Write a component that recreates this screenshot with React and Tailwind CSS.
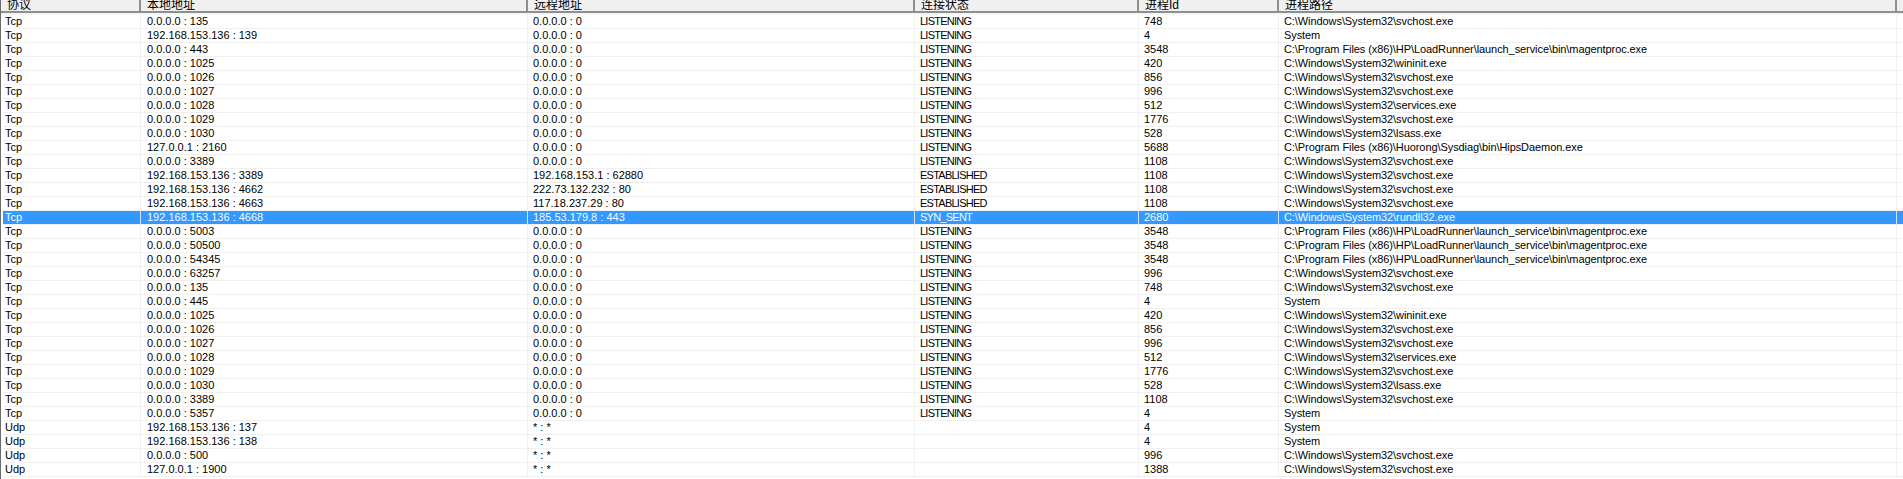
const tcp = (local, remote, state, pid, path) => ({ proto: "Tcp", local, remote, state, pid, path });
const udp = (local, pid, path) => ({ proto: "Udp", local, remote: "* : *", state: "", pid, path });

const SVCHOST = "C:\\Windows\\System32\\svchost.exe";
const WININIT = "C:\\Windows\\System32\\wininit.exe";
const SERVICES = "C:\\Windows\\System32\\services.exe";
const LSASS = "C:\\Windows\\System32\\lsass.exe";
const MAGENT = "C:\\Program Files (x86)\\HP\\LoadRunner\\launch_service\\bin\\magentproc.exe";
const ANY = "0.0.0.0 : 0";

const rows = [
  tcp("0.0.0.0 : 135", ANY, "LISTENING", "748", SVCHOST),
  tcp("192.168.153.136 : 139", ANY, "LISTENING", "4", "System"),
  tcp("0.0.0.0 : 443", ANY, "LISTENING", "3548", MAGENT),
  tcp("0.0.0.0 : 1025", ANY, "LISTENING", "420", WININIT),
  tcp("0.0.0.0 : 1026", ANY, "LISTENING", "856", SVCHOST),
  tcp("0.0.0.0 : 1027", ANY, "LISTENING", "996", SVCHOST),
  tcp("0.0.0.0 : 1028", ANY, "LISTENING", "512", SERVICES),
  tcp("0.0.0.0 : 1029", ANY, "LISTENING", "1776", SVCHOST),
  tcp("0.0.0.0 : 1030", ANY, "LISTENING", "528", LSASS),
  tcp("127.0.0.1 : 2160", ANY, "LISTENING", "5688", "C:\\Program Files (x86)\\Huorong\\Sysdiag\\bin\\HipsDaemon.exe"),
  tcp("0.0.0.0 : 3389", ANY, "LISTENING", "1108", SVCHOST),
  tcp("192.168.153.136 : 3389", "192.168.153.1 : 62880", "ESTABLISHED", "1108", SVCHOST),
  tcp("192.168.153.136 : 4662", "222.73.132.232 : 80", "ESTABLISHED", "1108", SVCHOST),
  tcp("192.168.153.136 : 4663", "117.18.237.29 : 80", "ESTABLISHED", "1108", SVCHOST),
  { ...tcp("192.168.153.136 : 4668", "185.53.179.8 : 443", "SYN_SENT", "2680", "C:\\Windows\\System32\\rundll32.exe"), selected: true },
  tcp("0.0.0.0 : 5003", ANY, "LISTENING", "3548", MAGENT),
  tcp("0.0.0.0 : 50500", ANY, "LISTENING", "3548", MAGENT),
  tcp("0.0.0.0 : 54345", ANY, "LISTENING", "3548", MAGENT),
  tcp("0.0.0.0 : 63257", ANY, "LISTENING", "996", SVCHOST),
  tcp("0.0.0.0 : 135", ANY, "LISTENING", "748", SVCHOST),
  tcp("0.0.0.0 : 445", ANY, "LISTENING", "4", "System"),
  tcp("0.0.0.0 : 1025", ANY, "LISTENING", "420", WININIT),
  tcp("0.0.0.0 : 1026", ANY, "LISTENING", "856", SVCHOST),
  tcp("0.0.0.0 : 1027", ANY, "LISTENING", "996", SVCHOST),
  tcp("0.0.0.0 : 1028", ANY, "LISTENING", "512", SERVICES),
  tcp("0.0.0.0 : 1029", ANY, "LISTENING", "1776", SVCHOST),
  tcp("0.0.0.0 : 1030", ANY, "LISTENING", "528", LSASS),
  tcp("0.0.0.0 : 3389", ANY, "LISTENING", "1108", SVCHOST),
  tcp("0.0.0.0 : 5357", ANY, "LISTENING", "4", "System"),
  udp("192.168.153.136 : 137", "4", "System"),
  udp("192.168.153.136 : 138", "4", "System"),
  udp("0.0.0.0 : 500", "996", SVCHOST),
  udp("127.0.0.1 : 1900", "1388", SVCHOST),
];

const headers = ["协议", "本地地址", "远程地址", "连接状态", "进程Id", "进程路径"];
const grid = "grid grid-cols-[138px_387px_387px_224px_140px_618px_1fr]";
const font = "font-['Liberation_Sans','Noto_Sans_CJK_SC',sans-serif] text-[11px]";

const App = () => {
  return (
    <div className={`h-[479px] w-[1903px] overflow-hidden border-l border-[#6b6b6b] bg-white text-black ${font}`}>
      <div className={`${grid} h-[13px] border-b-2 border-[#8e8f8f] bg-[#f0f0f0] pl-[2px]`}>
        {headers.map((h, i) => (
          <div key={h} className={`h-[11px] overflow-hidden border-r-2 border-[#8e8f8f] text-[12px] leading-[10px] ${i === 0 ? "pl-[4px]" : "pl-[6px]"}`}>
            {h}
          </div>
        ))}
        <div />
      </div>
      <div className="h-[2px] bg-[#f6f6f6]" />
      {rows.map((r, i) => (
        <div key={i} className={`${grid} ml-[2px] h-[14px] border-b border-[#f0f0f0] leading-[12px] ${r.selected ? "bg-[#3399ff] text-[#f4f9ff]" : ""}`}>
          <div className={`overflow-hidden border-r pl-[2px] ${r.selected ? "border-[#cfe5ff]" : "border-[#f0f0f0]"}`}>{r.proto}</div>
          <div className={`overflow-hidden border-r pl-[6px] whitespace-nowrap ${r.selected ? "border-[#cfe5ff]" : "border-[#f0f0f0]"}`}>{r.local}</div>
          <div className={`overflow-hidden border-r pl-[5px] whitespace-nowrap ${r.selected ? "border-[#cfe5ff]" : "border-[#f0f0f0]"}`}>{r.remote}</div>
          <div className={`overflow-hidden border-r pl-[5px] tracking-[-0.75px] whitespace-nowrap ${r.selected ? "border-[#cfe5ff]" : "border-[#f0f0f0]"}`}>{r.state}</div>
          <div className={`overflow-hidden border-r pl-[5px] whitespace-nowrap ${r.selected ? "border-[#cfe5ff]" : "border-[#f0f0f0]"}`}>{r.pid}</div>
          <div className={`overflow-hidden border-r pl-[5px] tracking-[-0.08px] whitespace-nowrap ${r.selected ? "border-[#cfe5ff]" : "border-[#f0f0f0]"}`}>{r.path}</div>
          <div />
        </div>
      ))}
    </div>
  );
};

export default App;
